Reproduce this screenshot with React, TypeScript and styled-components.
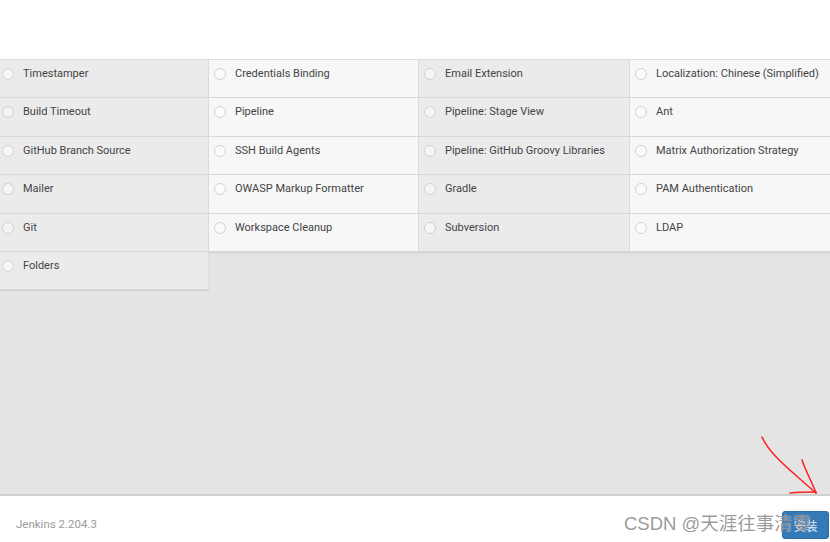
import * as React from 'react';
import styled, { createGlobalStyle } from 'styled-components';

const plugins: string[][] = [
  ['Timestamper', 'Credentials Binding', 'Email Extension', 'Localization: Chinese (Simplified)'],
  ['Build Timeout', 'Pipeline', 'Pipeline: Stage View', 'Ant'],
  ['GitHub Branch Source', 'SSH Build Agents', 'Pipeline: GitHub Groovy Libraries', 'Matrix Authorization Strategy'],
  ['Mailer', 'OWASP Markup Formatter', 'Gradle', 'PAM Authentication'],
  ['Git', 'Workspace Cleanup', 'Subversion', 'LDAP'],
  ['Folders'],
];

const GlobalStyle = createGlobalStyle`
  html, body {
    margin: 0;
    padding: 0;
    width: 830px;
    height: 542px;
    overflow: hidden;
    background: #fff;
    font-family: Roboto, 'Liberation Sans', Arial, sans-serif;
  }
`;

const Page = styled.div`
  position: relative;
  display: flex;
  flex-direction: column;
  width: 830px;
  height: 542px;
  overflow: hidden;
`;

const TopSpace = styled.div`
  height: 59px;
  background: #fff;
  flex-shrink: 0;
`;

const Body = styled.div`
  flex: 1;
  background: #e4e4e4;
  border-top: 1px solid #dcdcdc;
  overflow: hidden;
`;

const Grid = styled.div`
  display: grid;
  grid-template-columns: 212px 210px 211px 211px;
  grid-auto-rows: 38.4px;
  margin-left: -3px;
  width: 844px;
`;

const Cell = styled.div<{ $alt: boolean }>`
  display: flex;
  align-items: flex-start;
  gap: 9px;
  padding: 7px 0 0 5px;
  box-sizing: border-box;
  background: ${(p) => (p.$alt ? '#f7f7f7' : '#ebebeb')};
  border-bottom: 1px solid #d8d8d8;
  border-right: 1px solid #dedede;
  box-shadow: 0 1px 1px rgba(0, 0, 0, 0.08);
`;

const Radio = styled.span`
  width: 10px;
  height: 10px;
  margin-top: 1px;
  border: 1px solid #d2d2d2;
  border-radius: 50%;
  background: rgba(255, 255, 255, 0.5);
  flex-shrink: 0;
`;

const Label = styled.span`
  font-size: 11px;
  line-height: 14px;
  color: #444;
  white-space: nowrap;
`;

const Footer = styled.div`
  height: 46px;
  flex-shrink: 0;
  display: flex;
  align-items: center;
  justify-content: space-between;
  padding: 0 1px 0 16px;
  background: #fff;
  border-top: 2px solid #cfcfcf;
`;

const Version = styled.span`
  font-size: 11.5px;
  color: #9a9a9a;
  margin-top: 10px;
`;

const InstallButton = styled.button`
  width: 47px;
  height: 28px;
  margin-top: 12px;
  border: 1px solid #2e6da4;
  border-radius: 3px;
  background: #337ab7;
  color: rgba(255, 255, 255, 0.85);
  font-family: Roboto, 'Noto Sans CJK SC', sans-serif;
  font-size: 12px;
  padding: 0;
`;

const Watermark = styled.div`
  position: absolute;
  left: 624px;
  top: 509px;
  font-family: 'Liberation Sans', 'Noto Sans CJK SC', sans-serif;
  font-size: 18.5px;
  color: rgba(120, 120, 120, 0.75);
  text-shadow: 0 0 1px rgba(255, 255, 255, 0.8);
  white-space: nowrap;
  pointer-events: none;
`;

const Arrow = styled.svg`
  position: absolute;
  left: 0;
  top: 0;
  pointer-events: none;
`;

export default function App() {
  return (
    <Page>
      <GlobalStyle />
      <TopSpace />
      <Body>
        <Grid>
          {plugins.flatMap((row, r) =>
            row.map((name, c) => (
              <Cell key={`${r}-${c}`} $alt={c % 2 === 1}>
                <Radio />
                <Label>{name}</Label>
              </Cell>
            ))
          )}
        </Grid>
      </Body>
      <Footer>
        <Version>Jenkins 2.204.3</Version>
        <InstallButton>安装</InstallButton>
      </Footer>
      <Watermark>CSDN @天涯往事清零</Watermark>
      <Arrow width="830" height="542" viewBox="0 0 830 542">
        <path d="M762 437 C770 455 790 470 816 493" stroke="#ff2020" strokeWidth="1.5" fill="none" strokeLinecap="round" />
        <path d="M802 460 C806 472 812 482 816 493" stroke="#ff2020" strokeWidth="1.5" fill="none" strokeLinecap="round" />
        <path d="M790 493 C800 492 808 492 816 492" stroke="#ff2020" strokeWidth="1.5" fill="none" strokeLinecap="round" />
      </Arrow>
    </Page>
  );
}
